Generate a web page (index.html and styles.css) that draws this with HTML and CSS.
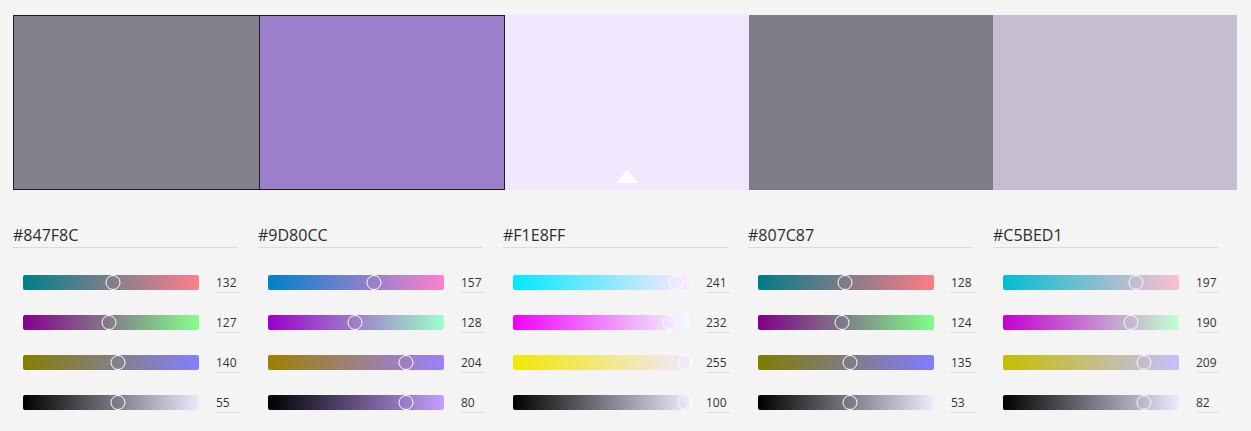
FILE: index.html
```html
<!DOCTYPE html>
<html>
<head>
<meta charset="utf-8">
<link rel="stylesheet" href="styles.css">
</head>
<body>
<div class="page">
  <div class="swatches">
    <div class="swatch sel-first" style="background:#847F8C"></div>
    <div class="swatch sel-second" style="background:#9D80CC"></div>
    <div class="swatch active" style="background:#F1E8FF"><span class="caret"></span></div>
    <div class="swatch" style="background:#807C87"></div>
    <div class="swatch" style="background:#C5BED1"></div>
  </div>
  <div class="columns">
    <div class="col">
      <div class="hex">#847F8C</div>
      <div class="row"><div class="track" style="background:linear-gradient(to right,rgb(0,127,140),rgb(255,127,140))"><span class="thumb" style="left:89.5px"></span></div><div class="val">132</div></div>
      <div class="row"><div class="track" style="background:linear-gradient(to right,rgb(132,0,140),rgb(132,255,140))"><span class="thumb" style="left:86.2px"></span></div><div class="val">127</div></div>
      <div class="row"><div class="track" style="background:linear-gradient(to right,rgb(132,127,0),rgb(132,127,255))"><span class="thumb" style="left:94.9px"></span></div><div class="val">140</div></div>
      <div class="row"><div class="track" style="background:linear-gradient(to right,#000,rgb(240,231,255))"><span class="thumb" style="left:95px"></span></div><div class="val">55</div></div>
    </div>
    <div class="col">
      <div class="hex">#9D80CC</div>
      <div class="row"><div class="track" style="background:linear-gradient(to right,rgb(0,128,204),rgb(255,128,204))"><span class="thumb" style="left:106.3px"></span></div><div class="val">157</div></div>
      <div class="row"><div class="track" style="background:linear-gradient(to right,rgb(157,0,204),rgb(157,255,204))"><span class="thumb" style="left:86.8px"></span></div><div class="val">128</div></div>
      <div class="row"><div class="track" style="background:linear-gradient(to right,rgb(157,128,0),rgb(157,128,255))"><span class="thumb" style="left:137.8px"></span></div><div class="val">204</div></div>
      <div class="row"><div class="track" style="background:linear-gradient(to right,#000,rgb(196,160,255))"><span class="thumb" style="left:137.8px"></span></div><div class="val">80</div></div>
    </div>
    <div class="col">
      <div class="hex">#F1E8FF</div>
      <div class="row"><div class="track" style="background:linear-gradient(to right,rgb(0,232,255),rgb(255,232,255))"><span class="thumb" style="left:162.6px"></span></div><div class="val">241</div></div>
      <div class="row"><div class="track" style="background:linear-gradient(to right,rgb(241,0,255),rgb(241,255,255))"><span class="thumb" style="left:156.6px"></span></div><div class="val">232</div></div>
      <div class="row"><div class="track" style="background:linear-gradient(to right,rgb(241,232,0),rgb(241,232,255))"><span class="thumb" style="left:172px"></span></div><div class="val">255</div></div>
      <div class="row"><div class="track" style="background:linear-gradient(to right,#000,rgb(241,232,255))"><span class="thumb" style="left:172px"></span></div><div class="val">100</div></div>
    </div>
    <div class="col">
      <div class="hex">#807C87</div>
      <div class="row"><div class="track" style="background:linear-gradient(to right,rgb(0,124,135),rgb(255,124,135))"><span class="thumb" style="left:86.8px"></span></div><div class="val">128</div></div>
      <div class="row"><div class="track" style="background:linear-gradient(to right,rgb(128,0,135),rgb(128,255,135))"><span class="thumb" style="left:84.2px"></span></div><div class="val">124</div></div>
      <div class="row"><div class="track" style="background:linear-gradient(to right,rgb(128,124,0),rgb(128,124,255))"><span class="thumb" style="left:91.5px"></span></div><div class="val">135</div></div>
      <div class="row"><div class="track" style="background:linear-gradient(to right,#000,rgb(242,234,255))"><span class="thumb" style="left:91.6px"></span></div><div class="val">53</div></div>
    </div>
    <div class="col">
      <div class="hex">#C5BED1</div>
      <div class="row"><div class="track" style="background:linear-gradient(to right,rgb(0,190,209),rgb(255,190,209))"><span class="thumb" style="left:133.1px"></span></div><div class="val">197</div></div>
      <div class="row"><div class="track" style="background:linear-gradient(to right,rgb(197,0,209),rgb(197,255,209))"><span class="thumb" style="left:128.4px"></span></div><div class="val">190</div></div>
      <div class="row"><div class="track" style="background:linear-gradient(to right,rgb(197,190,0),rgb(197,190,255))"><span class="thumb" style="left:141.2px"></span></div><div class="val">209</div></div>
      <div class="row"><div class="track" style="background:linear-gradient(to right,#000,rgb(240,232,255))"><span class="thumb" style="left:141.2px"></span></div><div class="val">82</div></div>
    </div>
  </div>
</div>
</body>
</html>
```

FILE: styles.css
```css
html, body {
  margin: 0;
  padding: 0;
  background: #f4f4f4;
}
body {
  font-family: "Open Sans", "Liberation Sans", sans-serif;
  color: #2c2c2c;
}
.page {
  padding: 15px 14px 0 13px;
}
.swatches {
  display: flex;
  height: 175px;
}
.swatch {
  flex: 1 1 0;
  position: relative;
  box-sizing: border-box;
}
.sel-first {
  border: 1px solid #1f1c28;
  flex-grow: 1.005;
}
.sel-second {
  border: 1px solid #1f1c28;
  border-left: none;
}
.caret {
  position: absolute;
  left: 50%;
  bottom: 7px;
  transform: translateX(-50%);
  width: 0;
  height: 0;
  border-left: 11px solid transparent;
  border-right: 11px solid transparent;
  border-bottom: 13px solid #ffffff;
}
.columns {
  display: flex;
  margin-top: 33px;
}
.col {
  width: 245px;
  flex: none;
}
.hex {
  width: 225px;
  font-size: 16px;
  line-height: 24px;
  height: 24px;
  border-bottom: 1px solid #dcdcdc;
  margin-bottom: 14px;
  color: #2c2c2c;
}
.row {
  display: flex;
  align-items: center;
  height: 40px;
}
.track {
  position: relative;
  margin-left: 10px;
  width: 176px;
  height: 15px;
  border-radius: 2px;
  flex: none;
}
.thumb {
  position: absolute;
  top: 0;
  width: 15px;
  height: 15px;
  box-sizing: border-box;
  border: 1.5px solid #ffffff;
  border-radius: 50%;
  transform: translateX(-50%);
}
.val {
  margin-left: 17px;
  width: 24px;
  height: 19px;
  margin-top: 3px;
  box-sizing: border-box;
  border-bottom: 1px solid #dddddd;
  font-size: 12px;
  line-height: 17px;
  color: #333333;
}
```
